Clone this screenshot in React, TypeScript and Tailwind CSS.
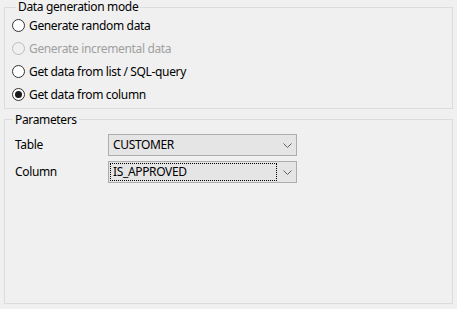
import React from "react";

function Radio({ label, checked = false, disabled = false }: { label: string; checked?: boolean; disabled?: boolean }) {
  return (
    <div className="flex h-[23px] items-center">
      <span
        className={
          "flex h-[13px] w-[13px] shrink-0 items-center justify-center rounded-full border " +
          (disabled ? "border-[#bcbcbc] bg-[#f0f0f0]" : "border-[#333333] bg-white")
        }
      >
        {checked && <span className="h-[7px] w-[7px] rounded-full bg-[#1a1a1a]" />}
      </span>
      <span className={"ml-[4px] " + (disabled ? "text-[#a0a0a0]" : "text-black")}>{label}</span>
    </div>
  );
}

function Chevron() {
  return (
    <svg width="9" height="5" viewBox="0 0 9 5" className="shrink-0">
      <path d="M0.5 0.5 L4.5 4.5 L8.5 0.5" fill="none" stroke="#606060" strokeWidth="1" />
    </svg>
  );
}

function Combo({ value, focused = false }: { value: string; focused?: boolean }) {
  return (
    <div className="flex h-[22px] w-[189px] items-center border border-[#adadad] bg-[#e5e5e5] pl-[1px] pr-[4px]">
      <div
        className={
          "flex h-[18px] flex-1 items-center pl-[2px] " +
          (focused ? "border border-dotted border-black" : "border border-transparent")
        }
      >
        {value}
      </div>
      <div className="ml-[6px] flex w-[9px] items-center justify-center">
        <Chevron />
      </div>
    </div>
  );
}

export default function App() {
  return (
    <div
      className="h-[309px] w-[457px] bg-[#f0f0f0] px-[4px] pt-[1px] text-[12px] tracking-[-0.35px] text-black"
      style={{ fontFamily: '"Segoe UI", "Noto Sans", sans-serif' }}
    >
      <fieldset className="h-[108px] w-[449px] border border-[#dcdcdc] pl-[7px]">
        <legend className="ml-[4px] px-[2px] leading-[12px]">Data generation mode</legend>
        <div className="flex flex-col pt-[1px]">
          <Radio label="Generate random data" />
          <Radio label="Generate incremental data" disabled />
          <Radio label="Get data from list / SQL-query" />
          <Radio label="Get data from column" checked />
        </div>
      </fieldset>
      <fieldset className="mt-[4px] h-[191px] w-[449px] border border-[#dcdcdc] pl-[10px]">
        <legend className="ml-[-2px] px-[2px] leading-[13px]">Parameters</legend>
        <div className="grid grid-cols-[93px_189px] items-center gap-y-[5px] pt-[8px]">
          <span>Table</span>
          <Combo value="CUSTOMER" />
          <span>Column</span>
          <Combo value="IS_APPROVED" focused />
        </div>
      </fieldset>
    </div>
  );
}
